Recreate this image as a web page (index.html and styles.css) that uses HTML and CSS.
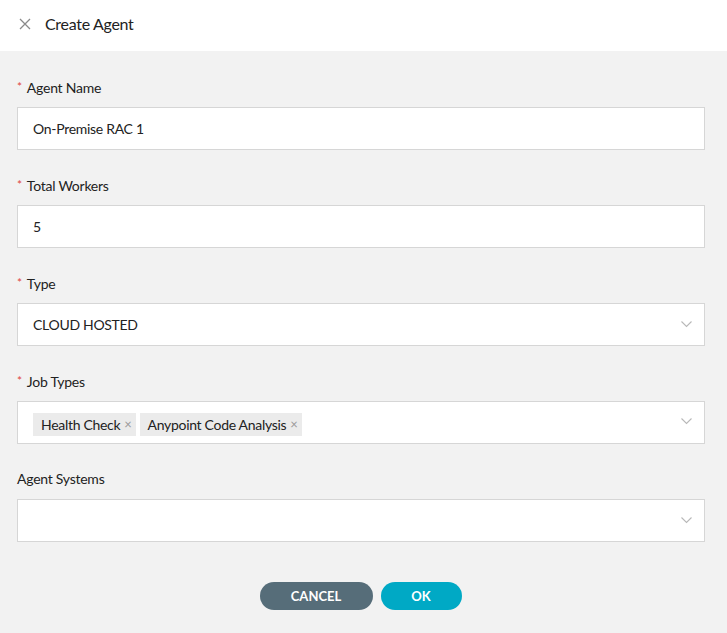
FILE: index.html
```html
<!DOCTYPE html>
<html>
<head>
<meta charset="utf-8">
<link rel="stylesheet" href="styles.css">
</head>
<body>
<div class="header">
  <svg class="close" width="12" height="12" viewBox="0 0 12 12"><path d="M1 1L11 11M11 1L1 11" stroke="#8a8a8a" stroke-width="1.3" fill="none"/></svg>
  <span class="title">Create Agent</span>
</div>
<div class="body">
  <div class="field">
    <div class="label"><span class="req">*</span>Agent Name</div>
    <div class="box">On-Premise RAC 1</div>
  </div>
  <div class="field">
    <div class="label"><span class="req">*</span>Total Workers</div>
    <div class="box">5</div>
  </div>
  <div class="field">
    <div class="label"><span class="req">*</span>Type</div>
    <div class="box select">CLOUD HOSTED<svg class="chev" width="11" height="7" viewBox="0 0 11 7"><path d="M0.5 0.5L5.5 5.5L10.5 0.5" stroke="#b8b8b8" stroke-width="1.1" fill="none"/></svg></div>
  </div>
  <div class="field">
    <div class="label"><span class="req">*</span>Job Types</div>
    <div class="box select tags">
      <span class="tag">Health Check<span class="x">×</span></span>
      <span class="tag">Anypoint Code Analysis<span class="x">×</span></span>
      <svg class="chev" width="11" height="7" viewBox="0 0 11 7"><path d="M0.5 0.5L5.5 5.5L10.5 0.5" stroke="#b8b8b8" stroke-width="1.1" fill="none"/></svg>
    </div>
  </div>
  <div class="field">
    <div class="label">Agent Systems</div>
    <div class="box select"><svg class="chev" width="11" height="7" viewBox="0 0 11 7"><path d="M0.5 0.5L5.5 5.5L10.5 0.5" stroke="#b8b8b8" stroke-width="1.1" fill="none"/></svg></div>
  </div>
  <div class="actions">
    <button class="btn cancel">CANCEL</button>
    <button class="btn ok">OK</button>
  </div>
</div>
</body>
</html>
```
FILE: styles.css
```css
html, body {
  margin: 0;
  padding: 0;
  background: #f2f2f2;
  font-family: Lato, "Open Sans", sans-serif;
  color: #222;
}
.header {
  height: 51px;
  background: #fff;
  display: flex;
  align-items: center;
  padding-left: 19px;
  padding-bottom: 4px;
  box-sizing: border-box;
}
.close {
  margin-right: 14px;
}
.title {
  font-size: 16px;
  letter-spacing: -0.3px;
  color: #222;
}
.body {
  padding: 26px 22px 0 17px;
}
.field {
  margin-bottom: 25px;
}
.label {
  font-size: 14px;
  letter-spacing: -0.25px;
  color: #222;
  height: 20px;
  line-height: 20px;
  margin-bottom: 10px;
}
.req {
  color: #e0463e;
  font-size: 12px;
  margin-right: 5px;
  vertical-align: 2px;
}
.box {
  height: 43px;
  box-sizing: border-box;
  background: #fff;
  border: 1px solid #d6d6d6;
  display: flex;
  align-items: center;
  padding-left: 15px;
  font-size: 14px;
  letter-spacing: -0.3px;
  color: #222;
  position: relative;
}
.box.tags {
  padding-left: 15px;
  padding-top: 4px;
  gap: 4px;
  height: 43px;
}
.chev {
  position: absolute;
  right: 12px;
  top: 17px;
}
.tags .chev {
  top: 16px;
}
.tag {
  background: #ebebeb;
  height: 23px;
  line-height: 23px;
  padding: 0 4px 0 8px;
  font-size: 14px;
  display: inline-flex;
  align-items: center;
}
.tag .x {
  color: #999;
  font-size: 13px;
  margin-left: 4px;
}
.actions {
  display: flex;
  justify-content: center;
  gap: 8px;
  padding-top: 15px;
  padding-right: 1px;
}
.btn {
  border: none;
  height: 28px;
  border-radius: 14px;
  color: #fff;
  font-family: Lato, "Open Sans", sans-serif;
  font-weight: bold;
  font-size: 13px;
  padding: 0;
}
.cancel {
  background: #566d79;
  width: 113px;
}
.ok {
  background: #00a9c5;
  width: 81px;
}
```
